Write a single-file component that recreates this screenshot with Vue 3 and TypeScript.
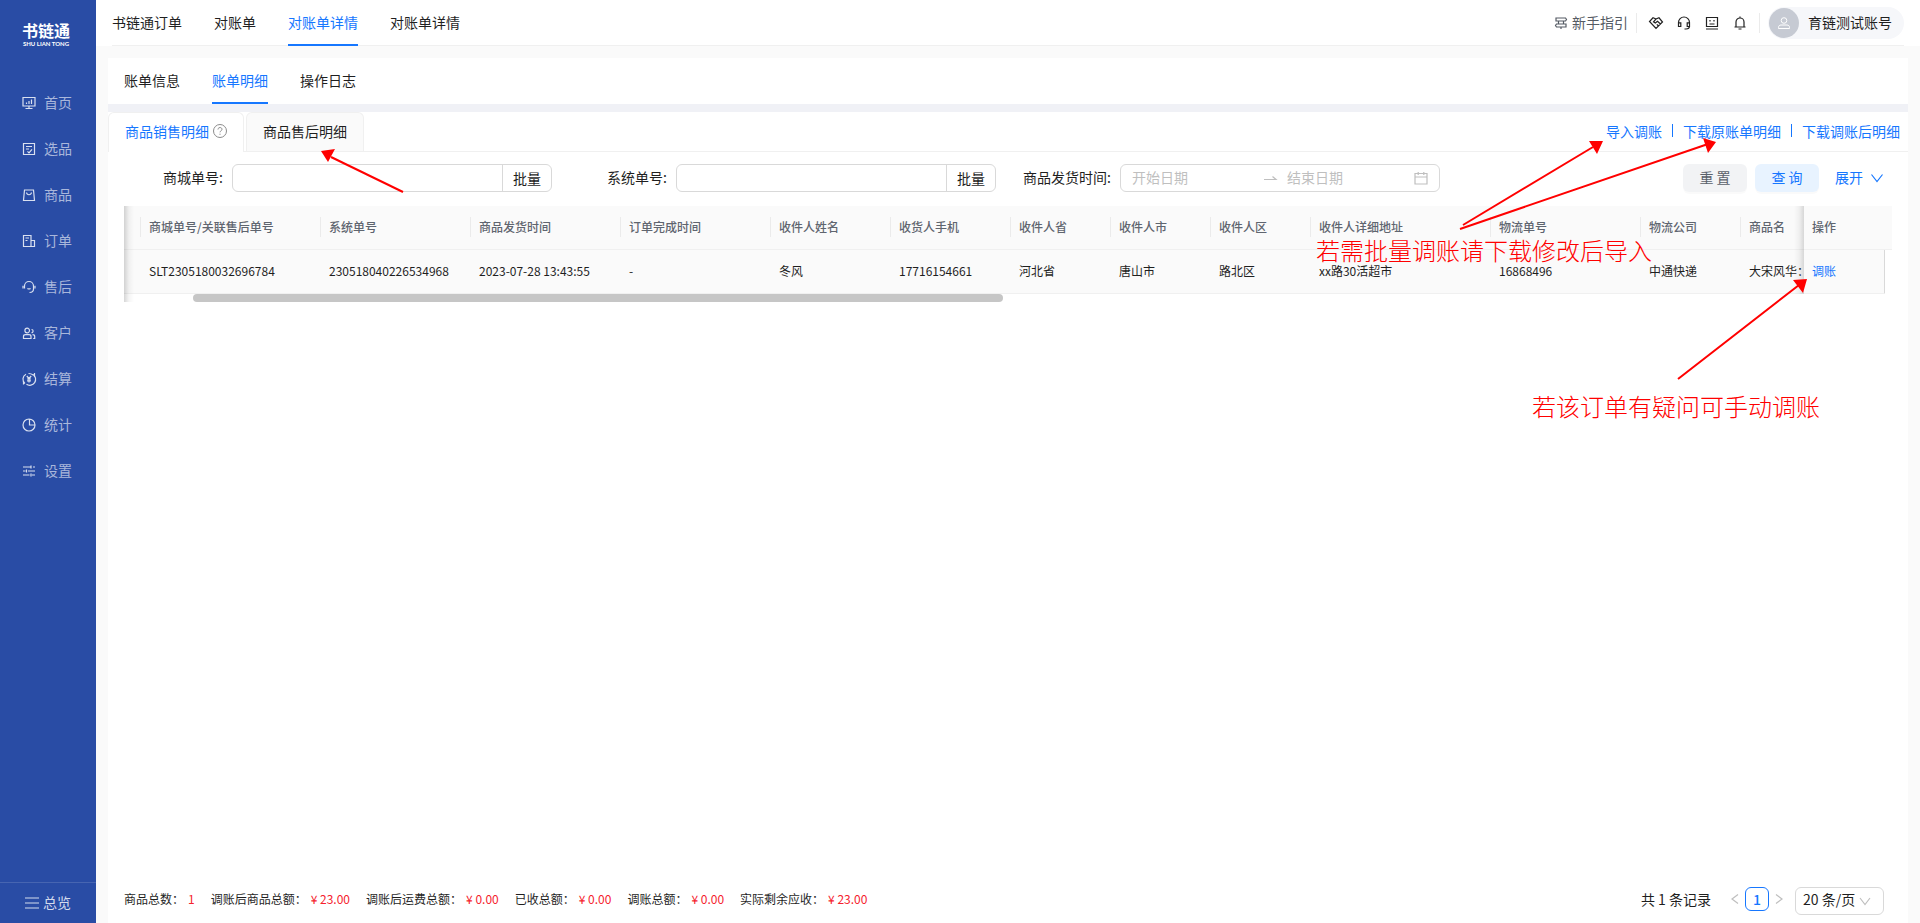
<script setup lang="ts">
interface Column {
  title: string
  value: string
  width: number | null
}

const menu: { label: string; icon: string }[] = [
  { label: '首页', icon: 'M1 1.500h12v8.500H1zM7 10v2.500M3.500 12.500h7M4.500 8V6.500M7 8V5M9.500 8V3.500' },
  { label: '选品', icon: 'M1.500 1.500h11v11h-11zM4 4.500h6M4 7h3M5.500 9.300l1.500 1.500 3-3.500' },
  { label: '商品', icon: 'M2.500 2h9l1 10.500h-11zM4.500 4.500c.5 3 4.500 3 5 0' },
  { label: '订单', icon: 'M1.500 1.500h7.500v11h-7.500zM9 6.500h3.500v6H9M3.500 4h3.500M3.500 6.500h2' },
  { label: '售后', icon: 'M2.500 8.500V6a4.500 4.500 0 0 1 9 0v3c0 2-1.500 3.500-4 3.500M1 5.800v2.800M13 5.800v2.800M5.500 8.300c.8.900 2.200.9 3 0' },
  { label: '客户', icon: 'M7.500 4.500a2.300 2.300 0 1 1-4.600 0a2.300 2.300 0 1 1 4.600 0M1.500 12.500v-2c0-1 1-1.800 2-1.800h3.500c1 0 2 .8 2 1.800v2zM9.500 3.500a1.600 1.600 0 1 1 0 3.200M10.500 8.700c1.200 0 2.200.8 2.200 1.800v2h-1.500' },
  { label: '结算', icon: 'M3 11.500A5.500 5.500 0 0 1 4 2.300M11 2.500A5.500 5.500 0 0 1 4.500 12.300M6.500 1.500c2 0 3.500.5 4.500 1.500M12.500 1v4M1.500 9v3.500M4.800 4l2.200 2.500L9.200 4M7 6.500v4M5 7h4M5 8.800h4' },
  { label: '统计', icon: 'M13 7a6 6 0 1 1-6-6a6 6 0 0 1 6 6zM7.500 1v6h5.500' },
  { label: '设置', icon: 'M1 3h7.500M11 3h2M9 1.500v3M1 7h2.500M6 7h7M4.500 5.500v3M1 11h6.500M10 11h3M9 9.500v3' },
]

const pageTabs = ['书链通订单', '对账单', '对账单详情', '对账单详情']
const billTabs = ['账单信息', '账单明细', '操作日志']
const actions = ['导入调账', '下载原账单明细', '下载调账后明细']

const columns: Column[] = [
  { title: '', value: '', width: 17 },
  { title: '商城单号/关联售后单号', value: 'SLT2305180032696784', width: 180 },
  { title: '系统单号', value: '230518040226534968', width: 150 },
  { title: '商品发货时间', value: '2023-07-28 13:43:55', width: 150 },
  { title: '订单完成时间', value: '-', width: 150 },
  { title: '收件人姓名', value: '冬风', width: 120 },
  { title: '收货人手机', value: '17716154661', width: 120 },
  { title: '收件人省', value: '河北省', width: 100 },
  { title: '收件人市', value: '唐山市', width: 100 },
  { title: '收件人区', value: '路北区', width: 100 },
  { title: '收件人详细地址', value: 'xx路30活超市', width: 180 },
  { title: '物流单号', value: '16868496', width: 150 },
  { title: '物流公司', value: '中通快递', width: 100 },
  { title: '商品名', value: '大宋风华：', width: null },
]

const totals = [
  { label: '商品总数', value: '1' },
  { label: '调账后商品总额', value: '¥ 23.00' },
  { label: '调账后运费总额', value: '¥ 0.00' },
  { label: '已收总额', value: '¥ 0.00' },
  { label: '调账总额', value: '¥ 0.00' },
  { label: '实际剩余应收', value: '¥ 23.00' },
]
</script>

<template>
  <div class="app">
    <aside class="sidebar">
      <div class="logo">
        <strong>书链通</strong>
        <small>SHU LIAN TONG</small>
      </div>
      <nav class="menu">
        <a v-for="item in menu" :key="item.label" href="#" class="menu-item">
          <svg class="ico" viewBox="0 0 14 14"><path :d="item.icon" /></svg>
          <span>{{ item.label }}</span>
        </a>
      </nav>
      <button type="button" class="overview">
        <svg class="ico" viewBox="0 0 14 14"><path d="M0 2h14M0 7h14M0 12h14" /></svg>
        <span>总览</span>
      </button>
    </aside>

    <div class="main">
      <header class="topbar">
        <div class="topbar-inner">
          <nav class="tabs">
            <a v-for="(tab, i) in pageTabs" :key="i" href="#" :class="['tab', { active: i === 2 }]">{{ tab }}</a>
          </nav>
          <div class="tools">
            <a href="#" class="guide">
              <svg class="ico" viewBox="0 0 14 14"><path d="M2 2h9.500l1 1.500-1 1.500H2zM12 8H2.500l-1 1.500 1 1.500H12zM4.500 5v3M9.500 5v3M7 11v2" /></svg>
              <span>新手指引</span>
            </a>
            <i class="rule"></i>
            <div class="icon-group">
              <button type="button" aria-label="合作">
                <svg class="ico" viewBox="0 0 14 14"><path d="M7 3L4 1.800.5 5.500 7 12.500l6.500-6.500L10 1.800 7 3 4.500 5.800l1.800 1.200L8.500 5.200l3 2.800M9.500 10L7.800 8.400" /></svg>
              </button>
              <button type="button" aria-label="客服">
                <svg class="ico" viewBox="0 0 14 14"><path d="M1.500 8V6.500a5.500 5.500 0 0 1 11 0V10c0 1.700-1.500 3-3.500 3H7.500M1.500 6.800h2.300v3.700H1.500zM10.200 6.800h2.300v3.700h-2.300z" /></svg>
              </button>
              <button type="button" aria-label="消息">
                <svg class="ico" viewBox="0 0 14 14"><path d="M1.500 1.500h11v9h-11zM1 13h12M5 4v1.500M9 4v1.500M4.500 8h5" /></svg>
              </button>
              <button type="button" aria-label="通知">
                <svg class="ico" viewBox="0 0 14 14"><path d="M3 11V6a4 4 0 0 1 8 0v5M1.500 11h11M7 .500V2M5.500 13h3" /></svg>
              </button>
            </div>
            <i class="rule"></i>
            <button type="button" class="account">
              <span class="avatar">
                <svg viewBox="0 0 14 14"><circle cx="7" cy="4.500" r="2.800" /><path d="M1.500 12.500v-1c0-1.500 1-2.500 2.500-2.500h6c1.500 0 2.500 1 2.500 2.500v1z" /></svg>
              </span>
              <span>育链测试账号</span>
            </button>
          </div>
        </div>
      </header>

      <main class="card">
        <nav class="tabs bill-tabs">
          <a v-for="(tab, i) in billTabs" :key="tab" href="#" :class="['tab', { active: i === 1 }]">{{ tab }}</a>
        </nav>

        <div class="detail-bar">
          <div class="detail-tabs">
            <button type="button" class="detail-tab current">
              商品销售明细
              <svg viewBox="0 0 14 14"><circle cx="7" cy="7" r="6.500" /><path d="M5 5.500c0-2.700 4-2.500 4-.2C9 6.800 7 6.800 7 8.300M7 9.700v1.100" /></svg>
            </button>
            <button type="button" class="detail-tab">商品售后明细</button>
          </div>
          <div class="actions">
            <a v-for="action in actions" :key="action" href="#">{{ action }}</a>
          </div>
        </div>

        <form class="filters" @submit.prevent>
          <div class="field">
            <label for="mall-no">商城单号:</label>
            <div class="control">
              <input id="mall-no" type="text" />
              <button type="button" class="batch">批量</button>
            </div>
          </div>
          <div class="field">
            <label for="system-no">系统单号:</label>
            <div class="control">
              <input id="system-no" type="text" />
              <button type="button" class="batch">批量</button>
            </div>
          </div>
          <div class="field">
            <label for="date-start">商品发货时间:</label>
            <div class="control range">
              <input id="date-start" type="text" placeholder="开始日期" />
              <svg class="ico" viewBox="0 0 14 14"><path d="M1 8.500h12L9.500 5.500" /></svg>
              <input type="text" placeholder="结束日期" aria-label="结束日期" />
              <svg class="ico" viewBox="0 0 14 14"><path d="M1 2.500h12v10.500H1zM1 6h12M4.200 1v3M9.800 1v3" /></svg>
            </div>
          </div>
          <div class="buttons">
            <button type="reset" class="btn">重 置</button>
            <button type="submit" class="btn primary">查 询</button>
            <button type="button" class="expand">
              <span>展开</span>
              <svg class="ico" viewBox="0 0 14 14"><path d="M1.500 3.500L7 10.500l5.500-7" /></svg>
            </button>
          </div>
        </form>

        <section class="table-box">
          <table>
            <colgroup>
              <col v-for="(c, i) in columns" :key="i" :style="c.width ? { width: c.width + 'px' } : {}" />
              <col class="col-action" />
              <col class="col-gutter" />
            </colgroup>
            <thead>
              <tr>
                <th v-for="(c, i) in columns" :key="i" :class="{ split: c.width }">{{ c.title }}</th>
                <th class="fixed">操作</th>
                <th></th>
              </tr>
            </thead>
            <tbody>
              <tr>
                <td v-for="(c, i) in columns" :key="i">{{ c.value }}</td>
                <td class="fixed"><a href="#">调账</a></td>
                <td class="gutter"></td>
              </tr>
            </tbody>
          </table>
          <div class="scroll"><div class="thumb"></div></div>
        </section>

        <footer class="footer">
          <dl class="totals">
            <div v-for="t in totals" :key="t.label">
              <dt>{{ t.label }}：</dt>
              <dd>{{ t.value }}</dd>
            </div>
          </dl>
          <div class="pager">
            <span class="count">共 1 条记录</span>
            <button type="button" aria-label="上一页" class="step">
              <svg class="ico" viewBox="0 0 14 14"><path d="M10 2.500L4 7l6 4.500" /></svg>
            </button>
            <button type="button" class="page">1</button>
            <button type="button" aria-label="下一页" class="step">
              <svg class="ico" viewBox="0 0 14 14"><path d="M4 2.500L10 7l-6 4.500" /></svg>
            </button>
            <div class="size">
              <select aria-label="每页条数"><option>20 条/页</option></select>
              <svg class="ico" viewBox="0 0 14 14"><path d="M2 4l5 6.500L12 4" /></svg>
            </div>
          </div>
        </footer>
      </main>
    </div>

    <svg class="notes notes-left" viewBox="0 0 100 50">
      <path class="line" d="M11 7L83 42" /><path class="head" d="M1 1l14-2-7 13z" />
    </svg>
    <svg class="notes notes-right" viewBox="0 0 520 290">
      <path class="line" d="M163 85L293 7M160 89L408 4M378 239L499 145" />
      <path class="head" d="M289 1h14l-6 13zM403-2l13 4-8 11zM493 140l14-1-4 14z" />
      <text x="16" y="120">若需批量调账请下载修改后导入</text>
      <text x="232" y="276">若该订单有疑问可手动调账</text>
    </svg>
  </div>
</template>

<style>
body {
  margin: 0;
}
</style>

<style scoped>
.app {
  position: relative;
  display: flex;
  min-height: 100vh;
  background: #fafafa;
  color: #1f1f1f;
  font: 14px/22px "Noto Sans CJK SC", sans-serif;
}
.app *,
.app {
  box-sizing: border-box;
}
a {
  color: inherit;
  text-decoration: none;
}
button,
input,
select {
  margin: 0;
  padding: 0;
  border: 0;
  outline: 0;
  background: none;
  color: inherit;
  font: inherit;
}
svg {
  flex: none;
  fill: none;
  stroke: currentColor;
  overflow: visible;
}
.ico {
  width: 14px;
  height: 14px;
  stroke-width: 1.2;
}
.sidebar {
  display: flex;
  flex: none;
  flex-direction: column;
  width: 96px;
  background: #294ca5;
  color: #a9b7db;
}
.logo {
  display: flex;
  flex-direction: column;
  align-items: center;
  gap: 1px;
  height: 80px;
  padding: 20px 4px 0 0;
  color: #fff;
}
.logo strong {
  font-size: 16px;
  line-height: 20px;
}
.logo small {
  font: 700 6px/6px Lato, sans-serif;
  white-space: nowrap;
}
.menu {
  flex: 1;
}
.menu-item {
  display: flex;
  align-items: center;
  gap: 8px;
  height: 46px;
  padding-left: 22px;
}
.menu-item span,
.overview span,
.guide span,
.account span:last-child,
.expand span {
  padding-bottom: 2px;
}
.menu-item .ico {
  color: #d9e0f0;
}
.overview {
  display: flex;
  align-items: center;
  justify-content: center;
  gap: 4px;
  height: 41px;
  border-top: 1px solid #4765b1;
  color: #d4dbed;
}
.main {
  display: flex;
  flex: 1;
  flex-direction: column;
  min-width: 0;
}
.topbar {
  padding: 0 16px;
  background: #fff;
}
.topbar-inner {
  display: flex;
  justify-content: space-between;
  height: 46px;
  border-bottom: 1px solid #f0f0f0;
}
.tabs {
  display: flex;
  gap: 32px;
  height: 46px;
}
.tab {
  line-height: 44px;
}
.tab.active {
  border-bottom: 2px solid #1677ff;
  color: #1677ff;
}
.tools {
  display: flex;
  align-items: center;
}
.guide {
  display: flex;
  align-items: center;
  gap: 4px;
  color: #555b64;
}
.rule {
  width: 1px;
  height: 20px;
  margin: 0 8px;
  background: #ebebeb;
}
.icon-group {
  display: flex;
  gap: 14px;
  margin: 0 4px;
}
.icon-group button {
  display: flex;
  color: #222;
}
.account {
  display: flex;
  align-items: center;
  gap: 9px;
  height: 32px;
  padding: 0 12px 0 1px;
  border-radius: 16px;
  background: #f6f7fa;
}
.avatar {
  display: grid;
  place-items: center;
  width: 30px;
  height: 30px;
  border-radius: 50%;
  background: #c6cad3;
  color: #fff;
}
.avatar svg {
  width: 14px;
  height: 14px;
}
.card {
  display: flex;
  flex: 1;
  flex-direction: column;
  margin: 12px 12px 0;
  background: #fff;
}
.bill-tabs {
  padding-left: 16px;
}
.detail-bar {
  display: flex;
  justify-content: space-between;
  height: 48px;
  border-top: 8px solid #f0f1f6;
  border-bottom: 1px solid #f0f0f0;
}
.detail-tabs {
  display: flex;
  gap: 2px;
}
.detail-tab {
  display: flex;
  align-items: center;
  gap: 4px;
  height: 39px;
  padding: 0 16px 2px;
  border: 1px solid #f0f0f0;
  border-bottom: 0;
  border-radius: 6px 6px 0 0;
  background: #fafafa;
}
.detail-tab.current {
  height: 40px;
  padding-bottom: 3px;
  background: #fff;
  color: #1677ff;
}
.detail-tab svg {
  width: 14px;
  height: 14px;
  color: #8c8c8c;
}
.actions {
  display: flex;
  align-items: center;
  padding: 0 8px 2px 0;
  color: #1677ff;
}
.actions a + a {
  display: flex;
  align-items: center;
}
.actions a + a::before {
  content: "";
  width: 1px;
  height: 13px;
  margin: 0 10px;
  background: #1677ff;
}
.filters {
  display: grid;
  grid-template-columns: repeat(4, minmax(0, 1fr));
  gap: 24px;
  padding: 12px 24px 14px;
}
.field {
  display: flex;
  align-items: center;
}
.field label {
  flex: none;
  width: 100px;
  padding: 0 9px 2px 0;
  text-align: right;
  white-space: nowrap;
}
.control {
  display: flex;
  flex: 1;
  min-width: 0;
  height: 28px;
  border: 1px solid #d9d9d9;
  border-radius: 6px;
}
.control input {
  flex: 1;
  min-width: 0;
}
.batch {
  width: 49px;
  border-left: 1px solid #d9d9d9;
}
.range {
  align-items: center;
  gap: 10px;
  padding: 0 11px;
  color: #bfbfbf;
}
.range input {
  padding-bottom: 2px;
}
.range #date-start {
  flex-basis: 4px;
}
.range input::placeholder {
  color: #bfbfbf;
  opacity: 1;
}
.buttons {
  display: flex;
  align-items: center;
  justify-content: flex-end;
  gap: 8px;
}
.btn {
  width: 64px;
  height: 28px;
  padding-bottom: 2px;
  border-radius: 6px;
  background: #f2f3f5;
  box-shadow: 0 2px 0 rgba(0, 0, 0, 0.02);
  color: #5b616b;
}
.btn.primary {
  background: #e8f3ff;
  color: #1677ff;
}
.expand {
  display: flex;
  align-items: center;
  gap: 7px;
  padding-left: 8px;
  color: #1677ff;
}
.table-box {
  position: relative;
  margin: 0 16px;
}
.table-box::before {
  content: "";
  position: absolute;
  z-index: 1;
  inset: 0 auto 0 0;
  width: 10px;
  background: linear-gradient(90deg, rgba(0, 0, 0, 0.16), rgba(0, 0, 0, 0.04) 50%, transparent);
}
table {
  width: 100%;
  table-layout: fixed;
  border-spacing: 0;
  font-size: 12px;
  line-height: 20px;
}
.col-action {
  width: 80px;
}
.col-gutter {
  width: 8px;
}
th,
td {
  position: relative;
  height: 44px;
  padding: 0 0 2px 8px;
  border-bottom: 1px solid #f0f0f0;
  background: #fafafa;
  text-align: left;
  white-space: nowrap;
}
th:last-child,
td:last-child {
  padding: 0;
}
th {
  color: #5f656f;
  font-weight: 500;
}
.split::after {
  content: "";
  position: absolute;
  top: 11px;
  right: 0;
  width: 1px;
  height: 20px;
  background: #ebebeb;
}
.fixed::before {
  content: "";
  position: absolute;
  inset: 0 100% -1px auto;
  width: 10px;
  background: linear-gradient(90deg, transparent, rgba(0, 0, 0, 0.04) 50%, rgba(0, 0, 0, 0.14));
}
td a {
  color: #1677ff;
}
.gutter {
  border-bottom-color: #fff;
  border-left: 1px solid #d9d9d9;
  background: #fff;
}
.scroll {
  height: 8px;
}
.thumb {
  width: 45.8%;
  height: 8px;
  margin-left: 3.9%;
  border-radius: 4px;
  background: #c6c6c6;
}
.footer {
  display: flex;
  align-items: flex-start;
  justify-content: space-between;
  margin-top: auto;
  padding: 0 24px 8px 16px;
}
.totals {
  display: flex;
  gap: 16px;
  margin: 0;
  font-size: 12px;
  line-height: 24px;
}
.totals div {
  display: flex;
  gap: 4px;
}
.totals dd {
  margin: 0;
  color: #f5222d;
}
.pager {
  display: flex;
  align-items: flex-start;
  line-height: 24px;
}
.count {
  margin-right: 14px;
}
.step {
  display: grid;
  place-items: center;
  width: 20px;
  height: 24px;
  color: #bfbfbf;
}
.page {
  width: 24px;
  height: 24px;
  border: 1px solid #1677ff;
  border-radius: 6px;
  color: #1677ff;
  font-weight: 500;
  line-height: 20px;
}
.size {
  display: flex;
  align-items: center;
  height: 28px;
  margin-left: 6px;
  padding: 0 11px 0 7px;
  border: 1px solid #d9d9d9;
  border-radius: 6px;
}
.size select {
  width: 55px;
  padding-bottom: 4px;
  appearance: none;
}
.size .ico {
  color: #bfbfbf;
}
.notes {
  position: absolute;
  pointer-events: none;
}
.notes-left {
  top: 150px;
  left: 320px;
  width: 100px;
  height: 50px;
}
.notes-right {
  top: 140px;
  right: 100px;
  width: 520px;
  height: 290px;
}
.line {
  stroke: #f00;
  stroke-width: 2;
}
.head {
  fill: #f00;
  stroke: none;
}
.notes text {
  fill: #f00;
  stroke: none;
  font-size: 24px;
  font-weight: 300;
}
</style>
